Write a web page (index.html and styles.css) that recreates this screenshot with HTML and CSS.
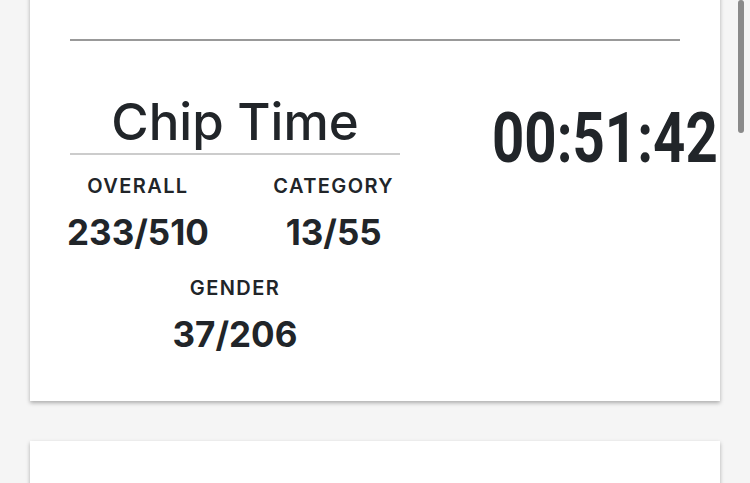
FILE: index.html
```html
<!DOCTYPE html>
<html lang="en">
<head>
    <meta charset="UTF-8">
    <meta name="viewport" content="width=device-width, initial-scale=1.0">
    <title>Race Result</title>
    <link rel="stylesheet" href="styles.css">
</head>
<body>
    <div class="results">
        <div class="card result-card">
            <hr class="top-rule">

            <div class="time-row">
                <div class="time-info">
                    <h2 class="time-title">Chip Time</h2>
                    <div class="stats">
                        <div class="stat">
                            <span class="stat-label">OVERALL</span>
                            <span class="stat-value">233/510</span>
                        </div>
                        <div class="stat">
                            <span class="stat-label">CATEGORY</span>
                            <span class="stat-value">13/55</span>
                        </div>
                    </div>
                    <div class="stat stat-center">
                        <span class="stat-label">GENDER</span>
                        <span class="stat-value">37/206</span>
                    </div>
                </div>

                <div class="time-clock">
                    <span class="clock-digits">00:51:42</span>
                </div>
            </div>
        </div>

        <div class="card next-card"></div>
    </div>

    <!-- scrollbar thumb -->
    <div class="scroll-thumb"></div>
</body>
</html>
```

FILE: styles.css
```css
:root {
    --text-color: #212529;
    --page-bg: #f5f5f5;
}

* {
    box-sizing: border-box;
    margin: 0;
    padding: 0;
}

body {
    background-color: var(--page-bg);
    font-family: Inter, 'Noto Sans', sans-serif;
    color: var(--text-color);
    overflow: hidden;
}

.results {
    padding: 0 30px;
}

.card {
    background: #fff;
    box-shadow: 0 2px 4px rgba(0,0,0,0.3);
}

.result-card {
    margin-top: -20px;
    padding: 59px 40px 47px;
}

.top-rule {
    border: none;
    border-top: 2px solid #999;
}

.time-row {
    display: flex;
    margin-top: 50px;
}

.time-info {
    width: 330px;
    flex-shrink: 0;
}

.time-title {
    font-size: 51px;
    font-weight: 500;
    line-height: 62px;
    text-align: center;
    border-bottom: 2px solid #ccc;
}

.stats {
    display: flex;
    justify-content: space-between;
    margin: 0 6px 0 -3px;
}

.stat {
    display: flex;
    flex-direction: column;
    align-items: center;
}

.stat-label {
    font-size: 20px;
    font-weight: 600;
    letter-spacing: 1.4px;
    line-height: 26px;
    margin-top: 18px;
}

.stat-value {
    font-size: 35px;
    font-weight: 700;
    line-height: 40px;
    margin-top: 13px;
}

.stat-center .stat-label {
    margin-top: 23px;
}

.time-clock {
    font-family: Roboto, 'Liberation Sans', sans-serif;
    font-size: 70px;
    font-weight: 700;
    line-height: 80px;
    padding-left: 92px;
    margin-top: 7px;
    white-space: nowrap;
}

.clock-digits {
    display: inline-block;
    transform: scaleX(0.805);
    transform-origin: left center;
}

.next-card {
    margin-top: 40px;
    height: 120px;
}

.scroll-thumb {
    position: fixed;
    top: 0;
    right: 6px;
    width: 6px;
    height: 133px;
    background: #8a8a8a;
    border-radius: 3px;
}
```
